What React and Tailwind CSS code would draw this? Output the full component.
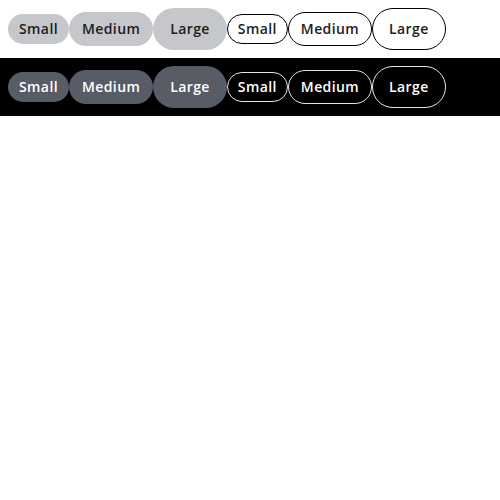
import React from "react";

const sizes = [
  { label: "Small", cls: "px-2.5 py-1" },
  { label: "Medium", cls: "px-3 py-1.5" },
  { label: "Large", cls: "px-4 py-2.5" },
];

function Row({ dark }) {
  const filled = dark ? "bg-[#575c66] border-transparent text-white" : "bg-[#c5c7ca] border-transparent text-[#1c1c1c]";
  const outline = dark ? "bg-transparent border-[#e5e5e5] text-white" : "bg-white border-black text-[#1c1c1c]";
  return (
    <div className={`flex items-center p-2 ${dark ? "bg-black" : "bg-white"}`}>
      {sizes.map((s) => (
        <button key={"f" + s.label} className={`rounded-full border text-sm leading-5 font-semibold tracking-[0.4px] ${s.cls} ${filled}`}>
          {s.label}
        </button>
      ))}
      {sizes.map((s) => (
        <button key={"o" + s.label} className={`rounded-full border text-sm leading-5 font-semibold tracking-[0.4px] ${s.cls} ${outline}`}>
          {s.label}
        </button>
      ))}
    </div>
  );
}

export default function App() {
  return (
    <div className="font-['Open_Sans',sans-serif]">
      <Row dark={false} />
      <Row dark={true} />
    </div>
  );
}
